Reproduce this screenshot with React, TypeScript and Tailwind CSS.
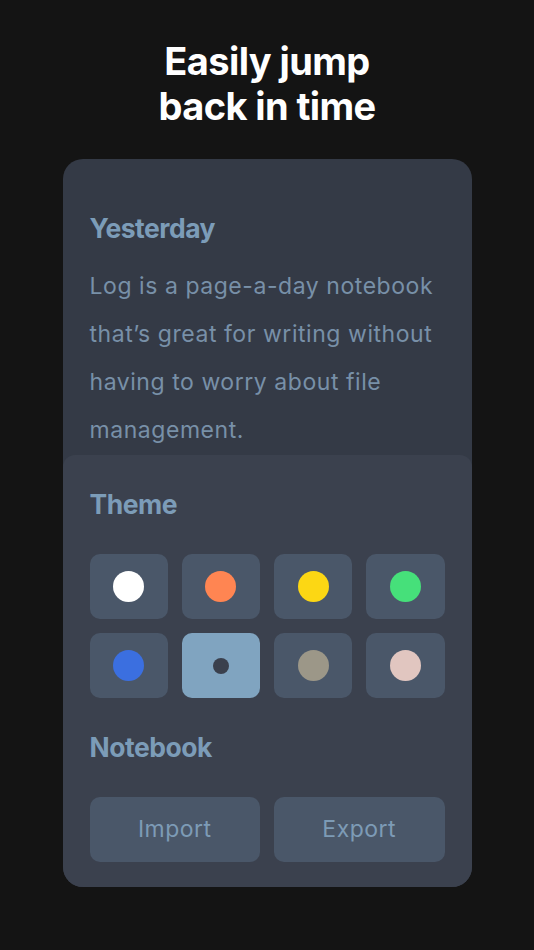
import React from "react";

// ── Theme swatches ───────────────────────────────────────────────────────────
const swatches = [
  { color: "bg-[#ffffff]" },
  { color: "bg-[#ff8552]" },
  { color: "bg-[#fcd714]" },
  { color: "bg-[#46e07a]" },
  { color: "bg-[#3b6fe0]" },
  { color: "bg-[#3a404d]", selected: true },
  { color: "bg-[#9c9788]" },
  { color: "bg-[#e1c6c0]" },
];

function Swatch({ color, selected }: { color: string; selected?: boolean }) {
  return (
    <div
      className={`h-[65px] rounded-[10px] flex items-center justify-center ${
        selected ? "bg-[#80a4c0]" : "bg-[#4a5769]"
      }`}
    >
      <div
        className={`rounded-full ${color} ${
          selected ? "w-[16px] h-[16px]" : "w-[31px] h-[31px]"
        }`}
      />
    </div>
  );
}

function SectionTitle({ children }: { children: React.ReactNode }) {
  return (
    <h2 className="text-[26.5px] leading-[32px] font-bold tracking-[-0.5px] text-[#7c9cb8]">
      {children}
    </h2>
  );
}

export default function App() {
  return (
    <div
      className="min-h-screen w-full bg-[#141414] flex flex-col items-center"
      style={{ fontFamily: "Inter, 'Noto Sans', sans-serif" }}
    >
      <h1 className="mt-[39px] text-center text-white text-[38px] leading-[45px] font-bold tracking-[-0.6px]">
        Easily jump
        <br />
        back in time
      </h1>

      <div className="mt-[30px] w-[409px] rounded-[20px] bg-[#343a46] overflow-hidden">
        {/* Today page preview */}
        <div className="px-[27px] pt-[53px]">
          <SectionTitle>Yesterday</SectionTitle>
          <p className="mt-[18px] text-[23px] leading-[48px] text-[#7890a8] tracking-[0.55px]">
            Log is a page-a-day notebook that’s great for writing without
            having to worry about file management.
          </p>
        </div>

        {/* Settings sheet */}
        <div className="mt-px rounded-t-[12px] bg-[#3b414e] px-[27px] pt-[33px] pb-[25px]">
          <SectionTitle>Theme</SectionTitle>
          <div className="mt-[34px] grid grid-cols-4 gap-[14px]">
            {swatches.map((s, i) => (
              <Swatch key={i} color={s.color} selected={s.selected} />
            ))}
          </div>

          <div className="mt-[33px]">
            <SectionTitle>Notebook</SectionTitle>
          </div>
          <div className="mt-[34px] grid grid-cols-2 gap-[14px]">
            <button className="h-[65px] rounded-[10px] bg-[#4a5769] text-[23px] tracking-[0.5px] text-[#7d9bb6]">
              Import
            </button>
            <button className="h-[65px] rounded-[10px] bg-[#4a5769] text-[23px] tracking-[0.5px] text-[#7d9bb6]">
              Export
            </button>
          </div>
        </div>
      </div>
    </div>
  );
}
